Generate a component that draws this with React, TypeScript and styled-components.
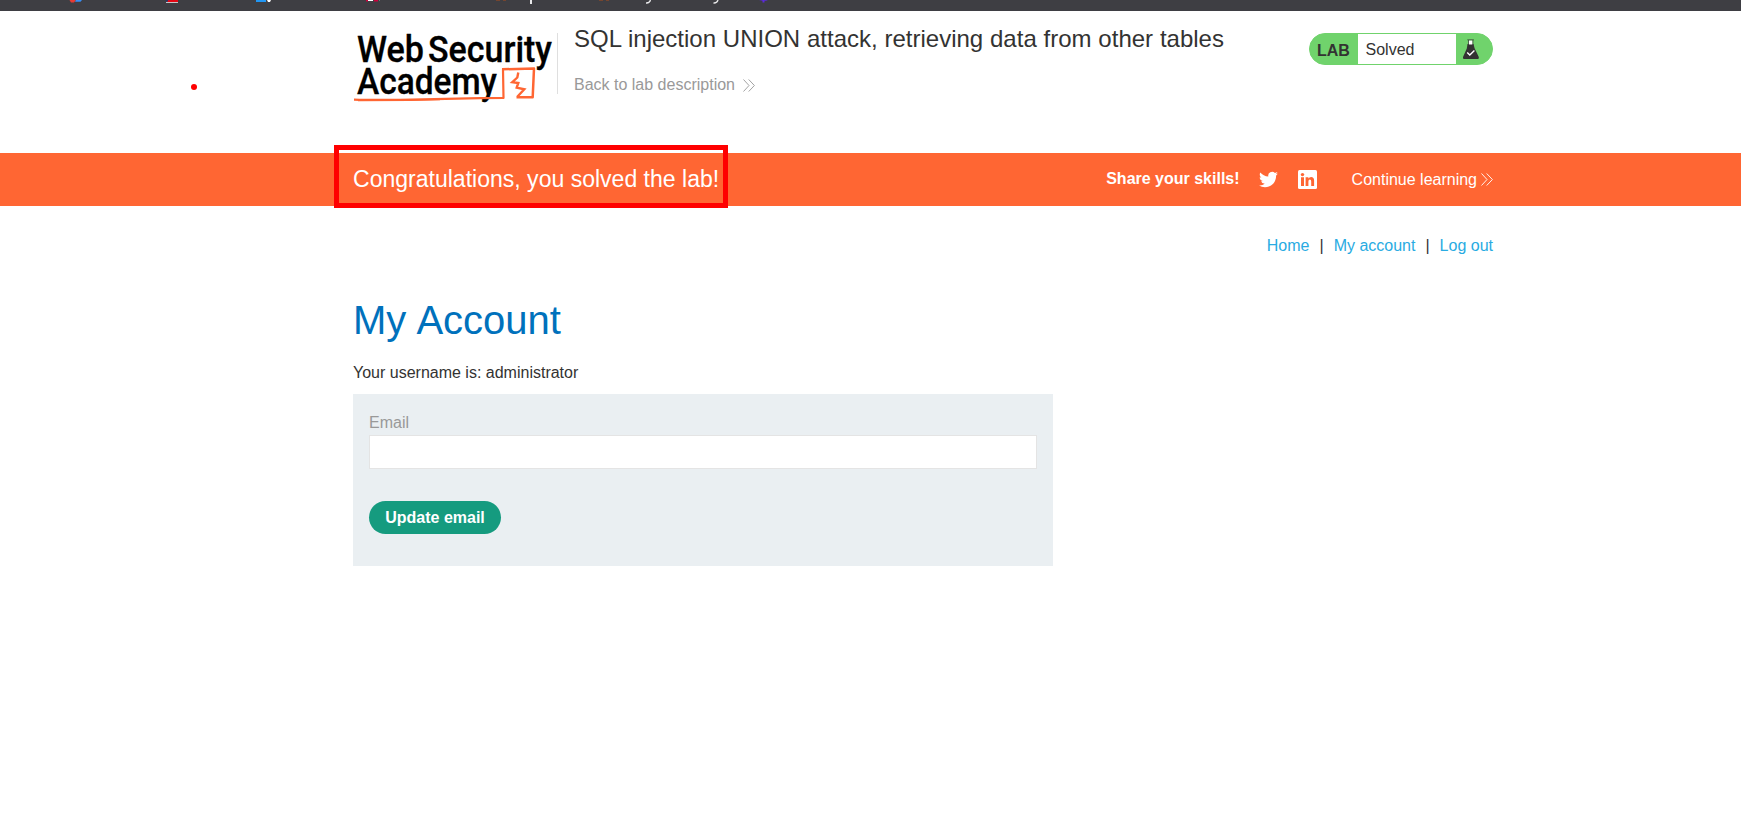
import React from "react";
import styled, { createGlobalStyle } from "styled-components";

const GlobalStyle = createGlobalStyle`
  * { box-sizing: border-box; }
  body {
    margin: 0;
    background: #fff;
    color: #333332;
    font-family: "Liberation Sans", Arial, sans-serif;
    font-size: 16px;
    line-height: 18px;
    overflow: hidden;
  }
  h1, h2, p { margin: 0; font-weight: 400; }
  a { color: inherit; text-decoration: none; }
`;

const Page = styled.div`
  position: relative;
  width: 1741px;
  height: 818px;
`;

const BookmarkBar = styled.div`
  height: 11px;
  background: #3e3e43;
  overflow: hidden;
  svg { display: block; }
`;

const Container = styled.div`
  width: 1140px;
  margin-left: 353px;
`;

const Header = styled(Container)`
  height: 142px;
  display: flex;
  align-items: flex-start;
`;

const LogoLink = styled.a`
  width: 204px;
  height: 83px;
  padding-top: 19px;
  svg { display: block; overflow: visible; }
`;

const TitleColumn = styled.div`
  display: flex;
  flex-direction: column;
  gap: 4px;
  height: 61px;
  margin-top: 22px;
  padding-left: 16px;
  border-left: 1px solid #dfdfdf;
  flex: 1;
`;

const LabTitle = styled.h2`
  font-size: 24px;
  line-height: 28px;
  margin-top: -8px;
  word-spacing: 0.15px;
  white-space: nowrap;
`;

const BackLink = styled.a`
  display: flex;
  align-items: center;
  gap: 8.5px;
  margin-top: 19px;
  color: #999;
`;

const Badge = styled.div`
  display: flex;
  width: 184px;
  height: 32px;
  margin-top: 22px;
  border: 1px solid #70d36c;
  border-radius: 16px;
  background: #70d36c;
  overflow: hidden;
`;

const BadgeLabel = styled.strong`
  width: 48px;
  padding: 8px 0 0 7px;
`;

const BadgeStatus = styled.span`
  width: 98px;
  padding: 7px 0 0 7.500px;
  background: #fff;
`;

const BadgeIcon = styled.span`
  padding: 5px 0 0 6px;
  svg { display: block; }
`;

const Banner = styled.section`
  height: 53px;
  background: #ff6633;
  color: #fff;
`;

const BannerInner = styled(Container)`
  height: 53px;
  display: flex;
  align-items: center;
`;

const BannerTitle = styled.h2`
  flex: 1;
  margin-top: -2px;
  font-size: 23.04px;
  line-height: 28px;
  white-space: nowrap;
`;

const Share = styled.div`
  display: flex;
  align-items: center;
  gap: 19.500px;
  strong { margin-top: -2px; }
  svg { display: block; }
  svg:first-of-type { margin-top: -1px; }
`;

const ContinueLink = styled.a`
  display: flex;
  align-items: center;
  gap: 4px;
  margin-left: 35px;
`;

const Nav = styled(Container)`
  display: flex;
  justify-content: flex-end;
  gap: 10px;
  padding-top: 31px;
  a { color: #29abe2; }
`;

const Account = styled(Container)`
  padding-top: 42px;
`;

const Heading = styled.h1`
  color: #0071bc;
  font-size: 40px;
  line-height: 46px;
  word-spacing: 1.200px;
`;

const Username = styled.p`
  padding-top: 21px;
`;

const EmailForm = styled.form`
  width: 700px;
  height: 172px;
  margin-top: 12px;
  padding: 20px 16px;
  background: #eaeff2;
`;

const Label = styled.label`
  display: block;
  color: #999;
`;

const Input = styled.input`
  display: block;
  width: 668px;
  height: 34px;
  margin-top: 3px;
  border: 1px solid #e4e4e4;
  background: #fff;
  outline: none;
`;

const UpdateButton = styled.button`
  display: block;
  width: 132px;
  height: 33px;
  margin-top: 32px;
  padding: 0;
  border: 0;
  border-radius: 17px;
  background: #159b7f;
  color: #fff;
  font: bold 16px "Liberation Sans", Arial, sans-serif;
`;

const Highlight = styled.div`
  position: absolute;
  left: 334px;
  top: 145px;
  width: 394px;
  height: 63px;
  border: 5px solid #ff0000;
`;

const Dot = styled.div`
  position: absolute;
  left: 191px;
  top: 84px;
  width: 6px;
  height: 6px;
  border-radius: 50%;
  background: #ff0000;
`;

const Chevrons = () => (
  <svg width="12" height="13" viewBox="0 0 12 13" fill="none" stroke="currentColor" strokeWidth="0.9">
    <path d="M.5.5 6 6.5l-5.500 6M5.700.5l5.700 6-5.700 6" />
  </svg>
);

const Logo = () => (
  <svg width="204" height="64" viewBox="353 30 204 64">
    <g fill="#000" stroke="#000" strokeWidth=".3" fontFamily="Roboto, sans-serif" fontWeight="500" fontSize="37.500">
      <text x="357" y="61.500" textLength="67" lengthAdjust="spacingAndGlyphs">Web</text>
      <text x="428" y="61.500" textLength="124" lengthAdjust="spacingAndGlyphs">Security</text>
      <text x="357" y="94" textLength="140" lengthAdjust="spacingAndGlyphs">Academy</text>
    </g>
    <g fill="none" stroke="#ff6633" strokeLinejoin="round">
      <path strokeWidth="2.200" d="M354 99.600Q372 100.200 400 99.800L480 98.200 503.500 98 503 69.600" />
      <path strokeWidth="2.500" d="M502 69.300 534 68.500 532.700 97.300 516.500 97.200" />
      <path strokeWidth="1.400" d="M358 100.600 410 100.200 440 99.600" />
      <path strokeWidth="2.400" strokeLinejoin="miter" d="M518.300 72.500 517.300 77.500 512.300 82.200 518.300 83 516.700 87.600 524.300 89.300 517.300 96.800" />
    </g>
  </svg>
);

const Flask = () => (
  <svg width="18" height="21" viewBox="0 0 18 21">
    <path fill="#333332" d="M5.500 5h6l1.100 4.200 4.200 8.900q.5 1.900-1 1.900H2q-1.500 0-1-1.900l3.800-8.700z" />
    <path fill="#fff" d="M6.800 1.500h3.700V5.500h-3.700z" />
    <path fill="none" stroke="#333332" strokeWidth=".7" d="M5.300 .8h6.600M6.500 1v5M10.900 1v5" />
    <path fill="none" stroke="#fff" strokeWidth="1.400" d="m5.200 13.500 2.600 2.600 4.600-4.500" />
  </svg>
);

const Twitter = () => (
  <svg width="19" height="19" viewBox="0 0 24 24" fill="#fff">
    <path d="M23.950 4.570a10 10 0 0 1-2.820.780 4.960 4.960 0 0 0 2.160-2.730c-.950.560-2 .960-3.130 1.190a4.920 4.920 0 0 0-8.380 4.480C7.690 8.100 4.070 6.130 1.640 3.160a4.820 4.820 0 0 0-.670 2.480c0 1.710.870 3.210 2.190 4.100a4.900 4.900 0 0 1-2.230-.620v.060a4.920 4.920 0 0 0 3.950 4.830 5 5 0 0 1-2.210.080 4.940 4.940 0 0 0 4.600 3.420A9.870 9.870 0 0 1 0 19.540a14 14 0 0 0 7.550 2.210c9.050 0 14-7.500 14-13.980 0-.210 0-.420-.020-.630a9.940 9.940 0 0 0 2.420-2.570z" />
  </svg>
);

const LinkedIn = () => (
  <svg width="19" height="19" viewBox="0 0 19 19">
    <rect width="19" height="19" rx="1.500" fill="#fff" />
    <g fill="#ff6633">
      <circle cx="4.500" cy="4.600" r="1.700" />
      <path d="M3 7.300h3V16H3zM7.600 7.300h2.800v1.200q.9-1.500 2.700-1.500 3 0 3 3.700V16h-2.900v-4.600q0-2-1.300-2-1.500 0-1.500 2V16H7.600z" />
    </g>
  </svg>
);

const BookmarkIcons = () => (
  <svg width="1741" height="11" viewBox="0 0 1741 11">
    <path fill="#e63b35" d="M69.500 0h6.500L74 2.500h-3z" />
    <path fill="#378df5" d="M76 0h6l-1.500 1.800H75z" />
    <path fill="#e30613" d="M167 0h11v2h-11z" />
    <path fill="#22386f" d="M166 0h2v1.500h-2z" />
    <path fill="#c6c6c8" d="M166 2h12v1h-12z" />
    <path fill="#2196f3" d="M256 0h10v2h-10z" />
    <path fill="#fff" d="M267 0h4l-1 2h-2z" />
    <path fill="#c9003c" d="M366 0h2v1.500h-2zM374 0h4v1.500h-4z" />
    <path fill="#fff" d="M368 0h5v1h-5z" />
    <path fill="#777" d="M379 0h1v1h-1z" />
    <path fill="#75452f" d="M496 0h4v1h-4zM503 0h3v1h-3zM599 0h4v1h-4zM606 0h3v1h-3z" />
    <path fill="#e8e8ea" d="M530 0h2v4h-2z" />
    <path fill="none" stroke="#e8e8ea" strokeWidth="1.300" d="M650.500 0Q649.500 3.300 646 3M718 0q-1 3.300-4.500 3" />
    <path fill="#5b2bd9" d="M759 0h9l-2 .8h-1.500V2.500h-2V.8z" />
  </svg>
);

export default function App() {
  return (
    <Page>
      <GlobalStyle />
      <BookmarkBar><BookmarkIcons /></BookmarkBar>
      <Header as="header">
        <LogoLink href="#"><Logo /></LogoLink>
        <TitleColumn>
          <LabTitle>SQL injection UNION attack, retrieving data from other tables</LabTitle>
          <BackLink href="#">Back to lab description<Chevrons /></BackLink>
        </TitleColumn>
        <Badge>
          <BadgeLabel>LAB</BadgeLabel>
          <BadgeStatus>Solved</BadgeStatus>
          <BadgeIcon><Flask /></BadgeIcon>
        </Badge>
      </Header>
      <Banner>
        <BannerInner>
          <BannerTitle>Congratulations, you solved the lab!</BannerTitle>
          <Share><strong>Share your skills!</strong><Twitter /><LinkedIn /></Share>
          <ContinueLink href="#">Continue learning<Chevrons /></ContinueLink>
        </BannerInner>
      </Banner>
      <Nav as="nav">
        <a href="#">Home</a><span>|</span><a href="#">My account</a><span>|</span><a href="#">Log out</a>
      </Nav>
      <Account as="main">
        <Heading>My Account</Heading>
        <Username>Your username is: administrator</Username>
        <EmailForm>
          <Label htmlFor="email">Email</Label>
          <Input id="email" type="email" />
          <UpdateButton type="button">Update email</UpdateButton>
        </EmailForm>
      </Account>
      <Highlight />
      <Dot />
    </Page>
  );
}
